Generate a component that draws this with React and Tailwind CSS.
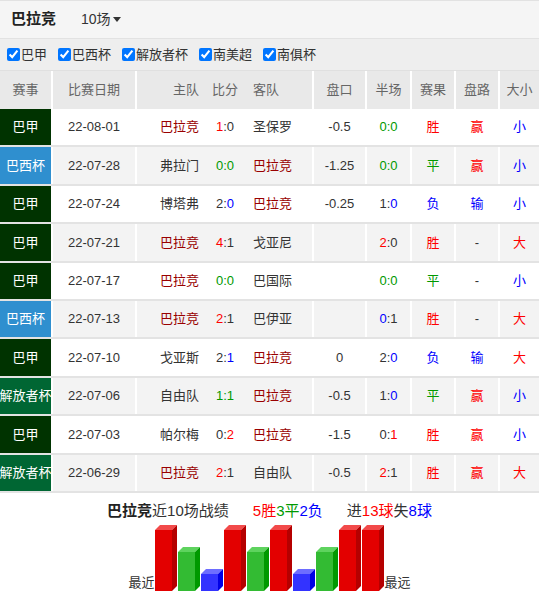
import React from "react";

const R = "text-[#ff0000]";
const G = "text-[#009900]";
const B = "text-[#0000ff]";
const D = "text-[#333333]";

const comp = {
  巴甲: "bg-[#003300]",
  巴西杯: "bg-[#2f8fcf]",
  解放者杯: "bg-[#006633]",
};

const S = (parts) => (
  <span>
    {parts.map(([t, c], i) => (
      <span key={i} className={c}>
        {t}
      </span>
    ))}
  </span>
);

const rows = [
  { c: "巴甲", d: "22-08-01", h: "巴拉竞", s: [["1", R], [":0", D]], a: "圣保罗", p: "-0.5", hf: [["0:0", G]], r: ["胜", R], l: ["赢", R], o: ["小", B] },
  { c: "巴西杯", d: "22-07-28", h: "弗拉门", s: [["0:0", G]], a: "巴拉竞", p: "-1.25", hf: [["0:0", G]], r: ["平", G], l: ["赢", R], o: ["小", B] },
  { c: "巴甲", d: "22-07-24", h: "博塔弗", s: [["2:", D], ["0", B]], a: "巴拉竞", p: "-0.25", hf: [["1:", D], ["0", B]], r: ["负", B], l: ["输", B], o: ["小", B] },
  { c: "巴甲", d: "22-07-21", h: "巴拉竞", s: [["4", R], [":1", D]], a: "戈亚尼", p: "", hf: [["2", R], [":0", D]], r: ["胜", R], l: ["-", D], o: ["大", R] },
  { c: "巴甲", d: "22-07-17", h: "巴拉竞", s: [["0:0", G]], a: "巴国际", p: "", hf: [["0:0", G]], r: ["平", G], l: ["-", D], o: ["小", B] },
  { c: "巴西杯", d: "22-07-13", h: "巴拉竞", s: [["2", R], [":1", D]], a: "巴伊亚", p: "", hf: [["0", B], [":1", D]], r: ["胜", R], l: ["-", D], o: ["大", R] },
  { c: "巴甲", d: "22-07-10", h: "戈亚斯", s: [["2:", D], ["1", B]], a: "巴拉竞", p: "0", hf: [["2:", D], ["0", B]], r: ["负", B], l: ["输", B], o: ["大", R] },
  { c: "解放者杯", d: "22-07-06", h: "自由队", s: [["1:1", G]], a: "巴拉竞", p: "-0.5", hf: [["1:", D], ["0", B]], r: ["平", G], l: ["赢", R], o: ["小", B] },
  { c: "巴甲", d: "22-07-03", h: "帕尔梅", s: [["0:", D], ["2", R]], a: "巴拉竞", p: "-1.5", hf: [["0:", D], ["1", R]], r: ["胜", R], l: ["赢", R], o: ["小", B] },
  { c: "解放者杯", d: "22-06-29", h: "巴拉竞", s: [["2", R], [":1", D]], a: "自由队", p: "-0.5", hf: [["2", R], [":1", D]], r: ["胜", R], l: ["赢", R], o: ["大", R] },
];

const bars = ["r", "g", "b", "r", "g", "r", "b", "g", "r", "r"];
const barStyle = {
  r: { H: 66, front: "#e30000", top: "#f24a4a", side: "#b50000" },
  g: { H: 44, front: "#33bb33", top: "#5ed35e", side: "#009900" },
  b: { H: 22, front: "#3333ff", top: "#6d6dff", side: "#0000e6" },
};

function Chart() {
  return (
    <svg width="229" height="66" viewBox="0 0 229 66" className="block">
      {bars.map((k, i) => {
        const { H, front, top, side } = barStyle[k];
        const x = i * 23;
        const y = 66 - H;
        return (
          <g key={i}>
            <rect x={x} y={y + 5} width="17" height={H - 5} fill={front} />
            <polygon points={`${x},${y + 5} ${x + 5},${y} ${x + 22},${y} ${x + 17},${y + 5}`} fill={top} />
            <polygon points={`${x + 17},${y + 5} ${x + 22},${y} ${x + 22},${61} ${x + 17},66`} fill={side} />
          </g>
        );
      })}
    </svg>
  );
}

const cell = "flex items-center justify-center border-r-2 border-white";

export default function App() {
  const checks = ["巴甲", "巴西杯", "解放者杯", "南美超", "南俱杯"];
  return (
    <div
      className="w-[539px] h-[598px] bg-white text-[13px] text-[#333] overflow-hidden"
      style={{ fontFamily: '"Liberation Sans", "Noto Sans CJK SC", sans-serif' }}
    >
      <div className="h-[39px] bg-[#f5f5f5] border-t border-b border-[#e2e2e2] flex items-center pl-[11px]">
        <span className="text-[15px] font-bold text-[#222]">巴拉竞</span>
        <span className="ml-[25px] text-[14px] text-[#333] flex items-center">
          10场
          <span className="ml-[2px] inline-block w-0 h-0 border-x-[4px] border-t-[5px] border-x-transparent border-t-[#333]" />
        </span>
      </div>
      <div className="h-[32px] bg-[#eeeeee] border-b border-[#e0e0e0] flex items-center pl-[7px] gap-[11px]">
        {checks.map((c) => (
          <label key={c} className="flex items-center">
            <input type="checkbox" defaultChecked className="w-[13px] h-[13px] m-0 mr-[1px]" />
            <span className="text-[13px] text-[#333]">{c}</span>
          </label>
        ))}
      </div>
      <div className="h-[38px] bg-[#e9e9e9] flex text-[#666]">
        <div className={`${cell} w-[53px]`}>赛事</div>
        <div className={`${cell} w-[84px]`}>比赛日期</div>
        <div className="flex w-[177px] border-r-2 border-white">
          <div className="w-[64px] flex items-center justify-end pr-[2px]">主队</div>
          <div className="w-[48px] flex items-center justify-center">比分</div>
          <div className="flex-1 flex items-center pl-[4px]">客队</div>
        </div>
        <div className={`${cell} w-[53px]`}>盘口</div>
        <div className={`${cell} w-[45px]`}>半场</div>
        <div className={`${cell} w-[44px]`}>赛果</div>
        <div className={`${cell} w-[44px]`}>盘路</div>
        <div className="flex-1 flex items-center justify-center">大小</div>
      </div>
      {rows.map((r, i) => (
        <div
          key={i}
          className={`h-[38.4px] flex border-b-2 border-[#e3e3e3] ${i % 2 ? "bg-[#f3f3f3]" : "bg-white"}`}
        >
          <div className={`${cell} w-[53px] ${comp[r.c]} text-white whitespace-nowrap`}>{r.c}</div>
          <div className={`${cell} w-[84px]`}>{r.d}</div>
          <div className="flex w-[177px] border-r-2 border-white">
            <div className={`w-[64px] flex items-center justify-end pr-[2px] ${r.h === "巴拉竞" ? "text-[#990000]" : ""}`}>{r.h}</div>
            <div className="w-[48px] flex items-center justify-center">{S(r.s)}</div>
            <div className={`flex-1 flex items-center pl-[4px] ${r.a === "巴拉竞" ? "text-[#990000]" : ""}`}>{r.a}</div>
          </div>
          <div className={`${cell} w-[53px]`}>{r.p}</div>
          <div className={`${cell} w-[45px]`}>{S(r.hf)}</div>
          <div className={`${cell} w-[44px] ${r.r[1]}`}>{r.r[0]}</div>
          <div className={`${cell} w-[44px] ${r.l[1]}`}>{r.l[0]}</div>
          <div className={`flex-1 flex items-center justify-center ${r.o[1]}`}>{r.o[0]}</div>
        </div>
      ))}
      <div className="pt-[8px] flex justify-center text-[15px] leading-[20px] gap-[24px]">
        <span>
          <span className="font-bold text-[#222]">巴拉竞</span>近10场战绩
        </span>
        <span>
          <span className={R}>5胜</span>
          <span className={G}>3平</span>
          <span className={B}>2负</span>
        </span>
        <span>
          进<span className={R}>13球</span>失<span className={B}>8球</span>
        </span>
      </div>
      <div className="mt-[4px] flex justify-center items-end">
        <span className="text-[13px] leading-[16px] text-[#333]">最近</span>
        <Chart />
        <span className="ml-[1px] text-[13px] leading-[16px] text-[#333]">最远</span>
      </div>
    </div>
  );
}
